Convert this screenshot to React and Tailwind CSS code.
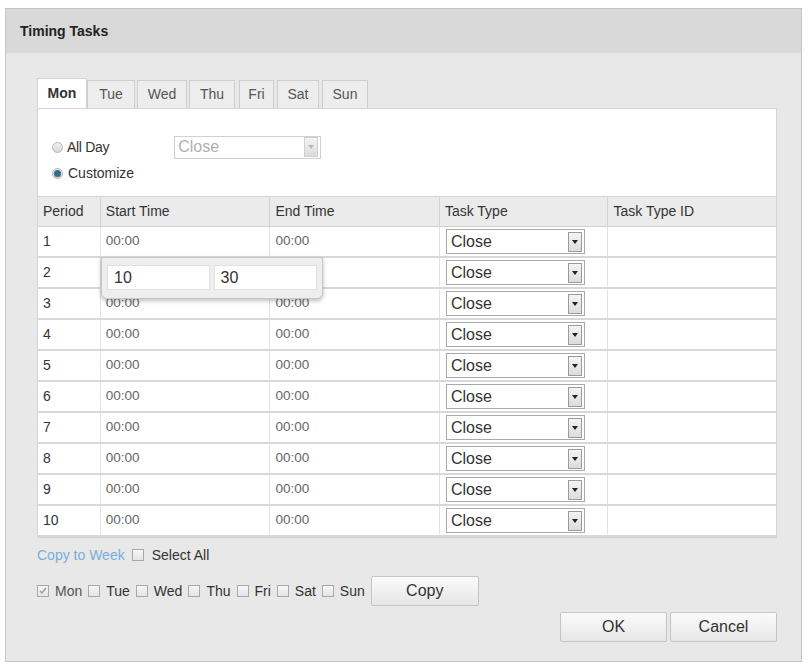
import React from 'react';

const tabs = [
  { label: 'Mon', cls: 'w-[50px]' },
  { label: 'Tue', cls: 'w-[48px]' },
  { label: 'Wed', cls: 'w-[50px] ml-[2px]' },
  { label: 'Thu', cls: 'w-[46px] ml-[2px]' },
  { label: 'Fri', cls: 'w-[35px] ml-[4px]' },
  { label: 'Sat', cls: 'w-[42px] ml-[3px]' },
  { label: 'Sun', cls: 'w-[46px] ml-[3px]' },
];

const days = ['Mon', 'Tue', 'Wed', 'Thu', 'Fri', 'Sat', 'Sun'];

function Arrow({ dim }) {
  return (
    <span
      className={`flex h-[20px] w-[14px] items-center justify-center border bg-gradient-to-b from-[#f4f4f4] to-[#dcdcdc] ${
        dim ? 'border-[#cfcfcf]' : 'border-[#9a9a9a]'
      }`}
    >
      <svg width="6" height="4" viewBox="0 0 6 4">
        <path d="M0 0h6L3 4z" fill={dim ? '#b8b8b8' : '#222'} />
      </svg>
    </span>
  );
}

function Radio({ checked }) {
  return (
    <span className="flex h-[11px] w-[11px] items-center justify-center rounded-full border border-[#b5b5b5] bg-gradient-to-b from-[#f0f0f0] to-[#d8d8d8]">
      {checked && <span className="h-[7px] w-[7px] rounded-full bg-[#2f6f8f]" />}
    </span>
  );
}

function Check({ checked }) {
  return (
    <span className="flex h-[12px] w-[12px] items-center justify-center border border-[#a8a8a8] bg-gradient-to-b from-[#f7f7f7] to-[#e4e4e4]">
      {checked && (
        <svg width="8" height="8" viewBox="0 0 8 8">
          <path d="M1 4l2 2 4-5" stroke="#9a9a9a" strokeWidth="1.4" fill="none" />
        </svg>
      )}
    </span>
  );
}

function Btn({ children, cls }) {
  return (
    <button
      type="button"
      className={`flex h-[30px] items-center justify-center rounded-[2px] border border-[#c4c4c4] bg-gradient-to-b from-[#fbfbfb] to-[#e6e6e6] text-[16px] text-[#333] ${cls}`}
    >
      {children}
    </button>
  );
}

export default function App() {
  const rows = Array.from({ length: 10 }, (_, i) => i + 1);

  return (
    <div className="h-[665px] w-[812px] bg-white pl-[5px] pt-[8px] font-['Liberation_Sans',Arial,sans-serif] text-[#333]">
      <div className="h-[654px] w-[797px] border border-[#c4c4c4] bg-[#e8e8e8]">
        <div className="flex h-[44px] items-center bg-[#d9d9d9] pl-[14px] text-[14px] font-bold text-[#222]">
          Timing Tasks
        </div>

        <div className="pl-[31px] pr-[24px] pt-[25px]">
          {/* tabs */}
          <div className="flex h-[30px] items-end">
            {tabs.map((t, i) =>
              i === 0 ? (
                <div
                  key={t.label}
                  className={`flex h-[30px] items-center justify-center border border-b-0 border-[#d4d4d4] bg-white text-[14px] font-bold text-[#333] ${t.cls}`}
                >
                  {t.label}
                </div>
              ) : (
                <div
                  key={t.label}
                  className={`flex h-[28px] items-center justify-center border border-b-0 border-[#cdcdcd] bg-[#ededed] text-[14px] text-[#555] ${t.cls}`}
                >
                  {t.label}
                </div>
              )
            )}
          </div>

          {/* panel */}
          <div className="w-[740px] border border-[#d4d4d4] bg-white">
            <div className="h-[87px] pl-[14px] pt-[26px]">
              <div className="flex h-[24px] items-center">
                <Radio />
                <span className="ml-[4px] text-[14px] tracking-[-0.3px]">All Day</span>
                <div className="ml-[65px] flex h-[23px] w-[147px] items-center justify-between border border-[#d0d0d0] pl-[3px] pr-[2px]">
                  <span className="text-[16px] text-[#b0b0b0]">Close</span>
                  <Arrow dim />
                </div>
              </div>
              <div className="mt-[4px] flex h-[20px] items-center">
                <Radio checked />
                <span className="ml-[5px] text-[14px]">Customize</span>
              </div>
            </div>

            {/* table */}
            <div className="relative">
              <div className="flex h-[31px] border-y border-[#d2d2d2] bg-[#ebebeb] text-[14px] text-[#333]">
                <div className="flex w-[63px] items-center border-r border-[#d2d2d2] pl-[5px]">Period</div>
                <div className="flex w-[170px] items-center border-r border-[#d2d2d2] pl-[5px]">Start Time</div>
                <div className="flex w-[170px] items-center border-r border-[#d2d2d2] pl-[5px]">End Time</div>
                <div className="flex w-[169px] items-center border-r border-[#d2d2d2] pl-[5px]">Task Type</div>
                <div className="flex w-[168px] items-center pl-[5px]">Task Type ID</div>
              </div>

              {rows.map((n) => (
                <div key={n} className="flex h-[31px] border-b-2 border-[#d8d8d8] text-[14px]">
                  <div className="flex w-[63px] items-center border-r border-[#e2e2e2] pl-[5px] text-[#333]">{n}</div>
                  <div className="flex w-[170px] items-center border-r border-[#e2e2e2] pl-[5px] text-[13.5px] text-[#666]">
                    {n === 2 ? '' : '00:00'}
                  </div>
                  <div className="flex w-[170px] items-center border-r border-[#e2e2e2] pl-[5px] text-[13.5px] text-[#666]">
                    {n === 2 ? '' : '00:00'}
                  </div>
                  <div className="flex w-[169px] items-center border-r border-[#e2e2e2] pl-[6px]">
                    <div className="flex h-[25px] w-[139px] items-center justify-between border border-[#a9a9a9] pl-[4px] pr-[2px]">
                      <span className="text-[16px] text-[#333]">Close</span>
                      <Arrow />
                    </div>
                  </div>
                  <div className="w-[168px]" />
                </div>
              ))}

              {/* time picker popup */}
              <div className="absolute left-[63px] top-[61px] flex h-[42px] w-[222px] gap-[4px] rounded-b-[6px] rounded-t-[2px] border border-[#c8c8c8] bg-[#eeeeee] px-[5px] pt-[7px] shadow-[0_2px_4px_rgba(0,0,0,0.25)]">
                <div className="flex h-[25px] w-[103px] items-center border border-[#e0e0e0] bg-white pl-[6px] text-[16px] text-[#333]">10</div>
                <div className="flex h-[25px] w-[104px] items-center border border-[#e0e0e0] bg-white pl-[6px] text-[16px] text-[#333]">30</div>
              </div>
            </div>
          </div>

          {/* copy to week */}
          <div className="mt-[7px] flex h-[20px] items-center text-[14px]">
            <span className="text-[#7aaedc]">Copy to Week</span>
            <span className="ml-[7px]">
              <Check />
            </span>
            <span className="ml-[8px] text-[#333]">Select All</span>
          </div>

          <div className="mt-[11px] flex h-[30px] items-center text-[14px]">
            {days.map((d, i) => (
              <div key={d} className="mr-[6px] flex items-center">
                <Check checked={i === 0} />
                <span className={`ml-[6px] ${i === 0 ? 'text-[#555]' : 'text-[#333]'}`}>{d}</span>
              </div>
            ))}
            <Btn cls="w-[108px]">Copy</Btn>
          </div>

          <div className="mt-[6px] flex w-[740px] justify-end gap-[3px]">
            <Btn cls="w-[107px]">OK</Btn>
            <Btn cls="w-[107px]">Cancel</Btn>
          </div>
        </div>
      </div>
    </div>
  );
}
